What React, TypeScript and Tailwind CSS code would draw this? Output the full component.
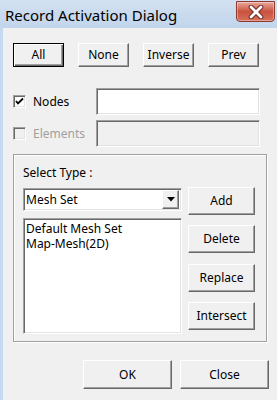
const font = { fontFamily: '"Noto Sans", "Liberation Sans", sans-serif' };

const raised =
  "border border-t-white border-l-white border-r-[#696969] border-b-[#696969] shadow-[inset_-1px_-1px_0_#a0a0a0] bg-[#f0f0f0]";
const sunken =
  "border border-t-[#a0a0a0] border-l-[#a0a0a0] border-r-white border-b-white shadow-[inset_1px_1px_0_#696969,inset_-1px_-1px_0_#e3e3e3]";

function Btn({ label, className = "", isDefault = false }: { label: string; className?: string; isDefault?: boolean }) {
  const look = isDefault
    ? "border border-black bg-[#f0f0f0] shadow-[inset_1px_1px_0_#fff,inset_-1px_-1px_0_#696969,inset_-2px_-2px_0_#a0a0a0]"
    : raised;
  return (
    <div className={`flex items-center justify-center text-[12px] text-black ${look} ${className}`}>
      {label}
    </div>
  );
}

function CheckBox({ checked, disabled }: { checked?: boolean; disabled?: boolean }) {
  return (
    <div
      className={`w-[13px] h-[13px] ${sunken} ${disabled ? "bg-[#f0f0f0]" : "bg-white"} flex items-center justify-center`}
    >
      {checked && (
        <svg width="9" height="9" viewBox="0 0 9 9">
          <path d="M1 4 L3 6.5 L8 1.5" stroke="#000" strokeWidth="1.8" fill="none" />
        </svg>
      )}
    </div>
  );
}

export default function App() {
  return (
    <div className="w-[277px] h-[400px] overflow-hidden bg-[#c7d9ee] flex flex-col" style={font}>
      {/* title bar */}
      <div className="h-[28px] shrink-0 flex items-start justify-between bg-gradient-to-b from-[#d3e1f1] to-[#c2d5ec]">
        <div className="pl-[5px] pt-[5px] leading-[20px] text-[15px] text-black">Record Activation Dialog</div>
        <div className="mt-[1px] mr-[2px] w-[39px] h-[21px] rounded-b-[4px] border border-[#8c3b32] bg-gradient-to-b from-[#e8a99c] via-[#c9523f] to-[#d7705a] flex items-center justify-center shadow-[inset_0_0_0_1px_rgba(255,255,255,0.35)]">
          <svg width="16" height="14" viewBox="0 0 16 14">
            <path d="M3 2 L13 12 M13 2 L3 12" stroke="#6e2a22" strokeWidth="4.6" strokeLinecap="round" />
            <path d="M3 2 L13 12 M13 2 L3 12" stroke="#fff" strokeWidth="2.8" strokeLinecap="round" />
          </svg>
        </div>
      </div>

      {/* client area */}
      <div className="flex-1 ml-[3px] bg-[#f0f0f0] pl-[10px] flex flex-col">
        <div className="mt-[15px] flex gap-[14px]">
          <Btn label="All" isDefault className="w-[51px] h-[24px]" />
          <Btn label="None" className="w-[51px] h-[24px]" />
          <Btn label="Inverse" className="w-[51px] h-[24px]" />
          <Btn label="Prev" className="w-[51px] h-[24px]" />
        </div>

        <div className="mt-[21px] flex items-center h-[27px]">
          <CheckBox checked />
          <span className="ml-[7px] w-[63px] text-[12px] text-black">Nodes</span>
          <div className={`w-[164px] h-[27px] bg-white ${sunken}`} />
        </div>

        <div className="mt-[5px] flex items-center h-[27px]">
          <CheckBox disabled />
          <span className="ml-[7px] w-[63px] text-[12px] text-[#a0a0a0]">Elements</span>
          <div className={`w-[164px] h-[27px] bg-[#f0f0f0] ${sunken}`} />
        </div>

        <div className="mt-[7px] w-[254px] h-[188px] border border-[#a0a0a0] shadow-[inset_1px_1px_0_#fff,1px_1px_0_#fff] pl-[9px] pt-[10px] flex flex-col">
          <div className="text-[12px] leading-[16px] text-black">Select Type :</div>
          <div className="mt-[7px] flex gap-[6px]">
            <div className="flex flex-col">
              <div className={`w-[159px] h-[23px] bg-white ${sunken} flex items-center justify-between pl-[2px] pr-[2px]`}>
                <span className="text-[12px] text-black">Mesh Set</span>
                <div className={`w-[17px] h-[19px] ${raised} flex items-center justify-center`}>
                  <svg width="8" height="5" viewBox="0 0 8 5">
                    <path d="M0 0 L8 0 L4 4.5 Z" fill="#000" />
                  </svg>
                </div>
              </div>
              <div className={`mt-[7px] w-[159px] h-[116px] bg-white ${sunken} pl-[2px] pt-[2px] text-[12px] leading-[15px] text-black`}>
                <div>Default Mesh Set</div>
                <div>Map-Mesh(2D)</div>
              </div>
            </div>
            <div className="-mt-[1px] flex flex-col">
              <Btn label="Add" className="w-[67px] h-[28px]" />
              <Btn label="Delete" className="mt-[10px] w-[67px] h-[28px]" />
              <Btn label="Replace" className="mt-[11px] w-[67px] h-[28px]" />
              <Btn label="Intersect" className="mt-[10px] w-[67px] h-[28px]" />
            </div>
          </div>
        </div>

        <div className="mt-[18px] ml-[70px] flex gap-[8px]">
          <Btn label="OK" className="w-[89px] h-[29px]" />
          <Btn label="Close" className="w-[89px] h-[29px]" />
        </div>
      </div>
    </div>
  );
}
